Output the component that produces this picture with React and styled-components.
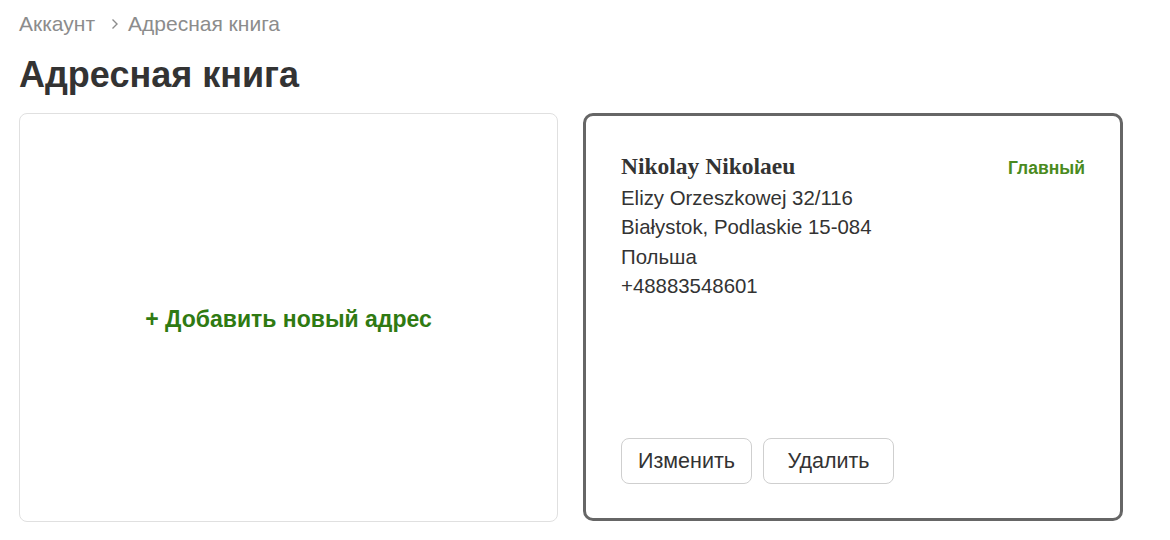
import React from 'react';
import styled, { createGlobalStyle } from 'styled-components';

const GlobalStyle = createGlobalStyle`
    body {
        margin: 0;
        background: #fff;
        font-family: "Liberation Sans", Arial, sans-serif;
        color: #333;
    }
`;

const Page = styled.div`
    padding: 12px 19px 18px;
`;

const Breadcrumbs = styled.nav`
    display: flex;
    align-items: center;
    font-size: 21px;
    line-height: 24px;
    color: #8c8c8c;
`;

const Chevron = styled.svg`
    width: 10px;
    height: 12px;
    margin: 0 8px 0 15px;
`;

const Title = styled.h1`
    margin: 18px 0 17px;
    font-size: 36px;
    line-height: 42px;
    font-weight: 700;
    color: #333;
`;

const Grid = styled.div`
    display: grid;
    grid-template-columns: 539px 540px;
    gap: 25px;
`;

const AddCard = styled.button`
    height: 409px;
    border: 1px solid #e0e0e0;
    border-radius: 8px;
    background: #fff;
    display: flex;
    align-items: center;
    justify-content: center;
    font-family: inherit;
    font-size: 23px;
    font-weight: 700;
    color: #2f7a12;
    cursor: pointer;
    padding: 3px 0 0;
`;

const AddressCard = styled.div`
    height: 408px;
    box-sizing: border-box;
    border: 3px solid #666;
    border-radius: 10px;
    padding: 34px 35px 34px;
    display: flex;
    flex-direction: column;
`;

const Header = styled.div`
    display: flex;
    justify-content: space-between;
    align-items: baseline;
    margin-bottom: 1.5px;
`;

const Name = styled.div`
    font-family: "Liberation Serif", "Times New Roman", serif;
    font-weight: 700;
    font-size: 23.5px;
    line-height: 32px;
    color: #333;
`;

const Badge = styled.span`
    font-size: 17.5px;
    font-weight: 700;
    color: #4a8a20;
`;

const Line = styled.div`
    font-size: 20.4px;
    line-height: 29.5px;
    color: #333;
`;

const Actions = styled.div`
    margin-top: auto;
    display: flex;
    gap: 11px;
`;

const Button = styled.button`
    width: 131px;
    height: 46px;
    padding: 0;
    border: 1px solid #cfcfcf;
    border-radius: 8px;
    background: #fff;
    font-family: inherit;
    font-size: 21.5px;
    color: #333;
    cursor: pointer;
`;

const address = {
    name: 'Nikolay Nikolaeu',
    lines: ['Elizy Orzeszkowej 32/116', 'Białystok, Podlaskie 15-084', 'Польша', '+48883548601'],
};

export default function App() {
    return (
        <Page>
            <GlobalStyle />
            <Breadcrumbs>
                <span>Аккаунт</span>
                <Chevron viewBox="0 0 10 12" fill="none" stroke="#8c8c8c" strokeWidth="1.4">
                    <path d="M2.5 1.5 L7 6 L2.5 10.5" />
                </Chevron>
                <span>Адресная книга</span>
            </Breadcrumbs>
            <Title>Адресная книга</Title>
            <Grid>
                <AddCard>+ Добавить новый адрес</AddCard>
                <AddressCard>
                    <Header>
                        <Name>{address.name}</Name>
                        <Badge>Главный</Badge>
                    </Header>
                    {address.lines.map((l) => (
                        <Line key={l}>{l}</Line>
                    ))}
                    <Actions>
                        <Button>Изменить</Button>
                        <Button>Удалить</Button>
                    </Actions>
                </AddressCard>
            </Grid>
        </Page>
    );
}
